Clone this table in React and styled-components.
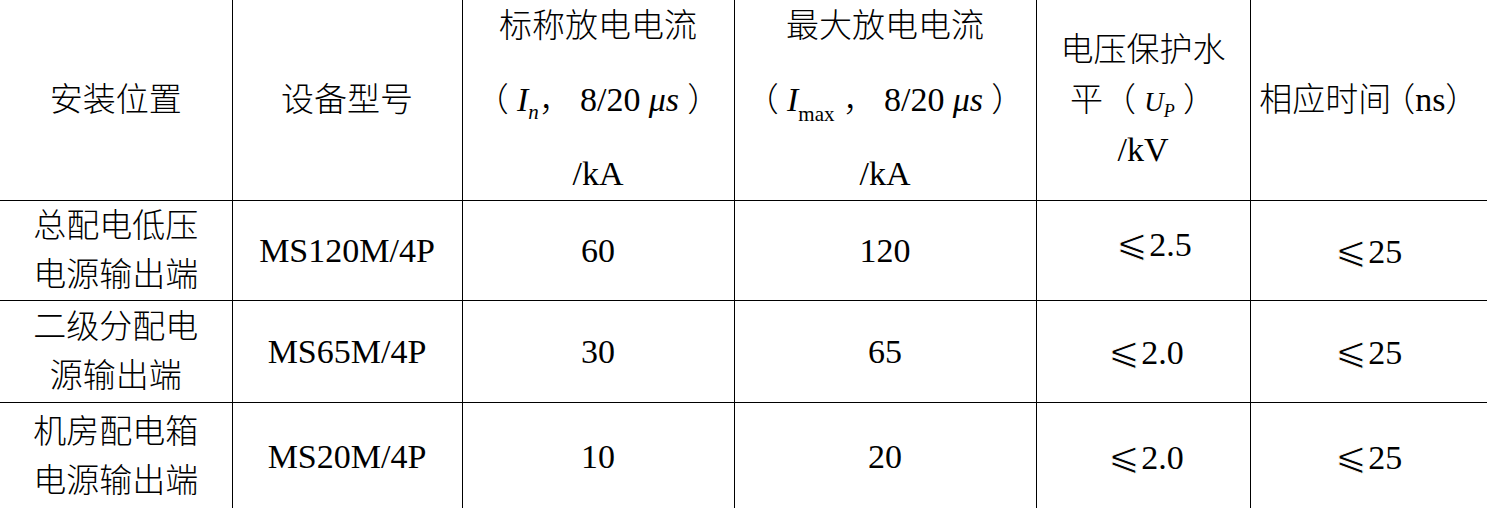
import React from "react";
import styled, { createGlobalStyle } from "styled-components";

const Global = createGlobalStyle`
  html, body { margin: 0; padding: 0; background: #fff; overflow: hidden; }
  body {
    font-family: "Liberation Serif", "Noto Sans CJK SC", serif;
    color: #000;
  }
`;

const Table = styled.table`
  border-collapse: collapse;
  table-layout: fixed;
  width: 1487px;
  font-size: 33px;
  font-weight: 300;
`;

const Row = styled.tr`
  height: ${(p) => p.$h}px;
`;

const Cell = styled.td`
  border: 1px solid #000;
  padding: 0;
  text-align: center;
  vertical-align: middle;
  line-height: ${(p) => p.$lh || 40}px;
  &:first-child { border-left: none; }
  &:last-child { border-right: none; }
  tr:first-child > & { border-top: none; }
`;

const Stack = styled.div`
  height: ${(p) => p.$h}px;
  display: flex;
  flex-direction: column;
  justify-content: ${(p) => p.$justify || "center"};
  align-items: center;
`;

const Line = styled.div`
  height: ${(p) => p.$lh}px;
  line-height: ${(p) => p.$lh}px;
  white-space: nowrap;
`;

const Shifted = styled.span`
  display: inline-block;
  transform: translate(${(p) => p.$dx || 0}px, ${(p) => p.$dy || 0}px);
`;

const Ital = styled.i`
  font-style: italic;
  font-family: "Liberation Serif", serif;
  font-size: ${(p) => p.$size || 34}px;
`;

const Sub = styled.sub`
  font-size: ${(p) => p.$size || 21}px;
  font-style: ${(p) => (p.$italic ? "italic" : "normal")};
  vertical-align: ${(p) => p.$drop || -8}px;
  line-height: 0;
`;

const Num = styled.span`
  font-size: 34px;
`;

const Tight = styled.span`
  letter-spacing: -9px;
`;

const Le = styled.span`
  font-family: "DejaVu Sans", serif;
  font-size: 38px;
  font-weight: 200;
  margin-right: 1px;
  -webkit-text-stroke: 0.9px #fff;
  paint-order: fill stroke;
`;

const rows = [
  { loc: ["总配电低压", "电源输出端"], model: "MS120M/4P", inom: "60", imax: "120", up: "2.5", t: "25", h: 100, upShift: { dx: 11, dy: -7 } },
  { loc: ["二级分配电", "源输出端"], model: "MS65M/4P", inom: "30", imax: "65", up: "2.0", t: "25", h: 102, upShift: { dx: 3, dy: 0 } },
  { loc: ["机房配电箱", "电源输出端"], model: "MS20M/4P", inom: "10", imax: "20", up: "2.0", t: "25", h: 108, upShift: { dx: 3, dy: 0 } },
];

export default function App() {
  return (
    <>
      <Global />
      <Table>
        <colgroup>
          <col style={{ width: 232 }} />
          <col style={{ width: 230 }} />
          <col style={{ width: 272 }} />
          <col style={{ width: 302 }} />
          <col style={{ width: 214 }} />
          <col style={{ width: 237 }} />
        </colgroup>
        <tbody>
          <Row $h={200}>
            <Cell>安装位置</Cell>
            <Cell>设备型号</Cell>
            <Cell>
              <Stack $h={200} $justify="space-between">
                <Line $lh={52}>标称放电电流</Line>
                <Line $lh={52}>
                  （&nbsp;<Ital>I</Ital>
                  <Sub $italic>n</Sub>，&nbsp;<Num>8/20</Num>&nbsp;<Ital>μs</Ital>&nbsp;）
                </Line>
                <Line $lh={52}>
                  <Num>/kA</Num>
                </Line>
              </Stack>
            </Cell>
            <Cell>
              <Stack $h={200} $justify="space-between">
                <Line $lh={52}>最大放电电流</Line>
                <Line $lh={52}>
                  （&nbsp;<Ital>I</Ital>
                  <Sub $drop={-10}>max</Sub>&nbsp;，&nbsp;<Num>8/20</Num>&nbsp;<Ital>μs</Ital>&nbsp;）
                </Line>
                <Line $lh={52}>
                  <Num>/kA</Num>
                </Line>
              </Stack>
            </Cell>
            <Cell>
              <Stack $h={200}>
                <Line $lh={50}>电压保护水</Line>
                <Line $lh={50}>
                  平（&nbsp;<Ital $size={27}>U</Ital>
                  <Sub $italic $size={18} $drop={-6}>P</Sub>&nbsp;）
                </Line>
                <Line $lh={50}>
                  <Num>/kV</Num>
                </Line>
              </Stack>
            </Cell>
            <Cell>
              相应时<Tight>间</Tight>（<Num>ns</Num>）
            </Cell>
          </Row>
          {rows.map((r) => (
            <Row key={r.model} $h={r.h}>
              <Cell $lh={49}>
                {r.loc[0]}
                <br />
                {r.loc[1]}
              </Cell>
              <Cell>
                <Num>{r.model}</Num>
              </Cell>
              <Cell>
                <Num>{r.inom}</Num>
              </Cell>
              <Cell>
                <Num>{r.imax}</Num>
              </Cell>
              <Cell>
                <Shifted $dx={r.upShift.dx} $dy={r.upShift.dy}>
                  <Le>⩽</Le>
                  <Num>{r.up}</Num>
                </Shifted>
              </Cell>
              <Cell>
                <Le>⩽</Le>
                <Num>{r.t}</Num>
              </Cell>
            </Row>
          ))}
        </tbody>
      </Table>
    </>
  );
}
